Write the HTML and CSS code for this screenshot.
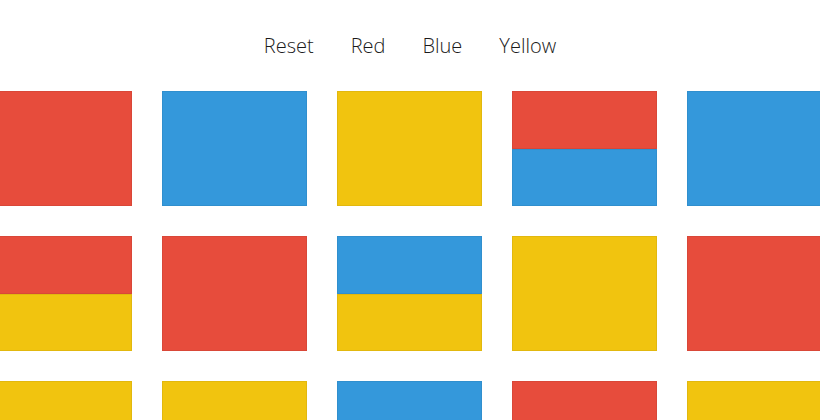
FILE: index.html
```html
<!DOCTYPE html>
<html>
<head>
<meta charset="utf-8">
<link rel="stylesheet" href="styles.css">
</head>
<body>
<nav class="nav">
  <a class="nav-link">Reset</a>
  <a class="nav-link">Red</a>
  <a class="nav-link">Blue</a>
  <a class="nav-link">Yellow</a>
</nav>
<main class="grid">
  <div class="tile red"></div>
  <div class="tile blue"></div>
  <div class="tile yellow"></div>
  <div class="tile split"><div class="half red"></div><div class="half blue"></div></div>
  <div class="tile blue"></div>

  <div class="tile split"><div class="half red"></div><div class="half yellow"></div></div>
  <div class="tile red"></div>
  <div class="tile split"><div class="half blue"></div><div class="half yellow"></div></div>
  <div class="tile yellow"></div>
  <div class="tile red"></div>

  <div class="tile yellow"></div>
  <div class="tile yellow"></div>
  <div class="tile blue"></div>
  <div class="tile red"></div>
  <div class="tile yellow"></div>
</main>
</body>
</html>
```
FILE: styles.css
```css
html, body {
  margin: 0;
  padding: 0;
  background: #ffffff;
  overflow: hidden;
  height: 420px;
}
body {
  font-family: "Open Sans", "Liberation Sans", sans-serif;
  color: #333333;
}
.nav {
  display: flex;
  justify-content: center;
  gap: 37px;
  padding-top: 33px;
  height: 26px;
}
.nav-link {
  font-size: 20px;
  font-weight: 300;
  line-height: 26px;
  color: #1a1a1a;
  cursor: pointer;
}
.grid {
  display: grid;
  grid-template-columns: repeat(5, 145px);
  grid-auto-rows: 115px;
  gap: 30px;
  width: 845px;
  height: 329px;
  overflow: hidden;
  margin: 32px 0 0 -13px;
}
.tile {
  box-sizing: border-box;
  border: 1px solid rgba(0, 0, 0, 0.06);
  display: flex;
  flex-direction: column;
}
.split {
  border: none;
}
.half {
  flex: 1;
  box-sizing: border-box;
  border: 1px solid rgba(0, 0, 0, 0.06);
}
.red { background: #e74c3c; }
.blue { background: #3498db; }
.yellow { background: #f1c40f; }
```
